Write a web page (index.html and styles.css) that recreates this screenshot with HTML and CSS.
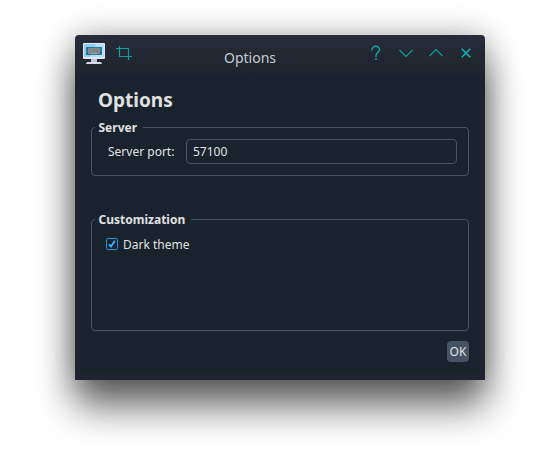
FILE: index.html
```
<!DOCTYPE html>
<html lang="en">
<head>
<meta charset="utf-8">
<title>Options</title>
<link rel="stylesheet" href="styles.css">
</head>
<body>
<main class="window">
  <header class="titlebar">
    <svg class="app-icon" width="24" height="22" viewBox="0 0 24 22">
      <rect x="1" y="0" width="22" height="16" rx="1" fill="#e2e5f3"/>
      <rect x="2" y="1" width="20" height="13" fill="#91cdf0"/>
      <path d="M14 1h8v13h-14z" fill="#b4e0f8"/>
      <rect x="4" y="4" width="16" height="8" fill="#227a99"/>
      <rect x="6" y="5" width="12" height="6" fill="#858b8e"/>
      <path d="M7 6.500h10M8 8.500h8" stroke="#767d80" stroke-dasharray="2 1"/>
      <path d="M9 10.500h6" stroke="#a1a5a7"/>
      <rect x="9" y="16" width="6" height="3" fill="#c0c4da"/>
      <path d="M5 19h14l1 2H4z" fill="#d6d9e9"/>
    </svg>
    <svg class="crop-icon" width="16" height="16" viewBox="0 0 16 16">
      <path d="M0 3.500h12.500V15M3.500 1v10.500H16" class="stroke"/>
    </svg>
    <span class="title">Options</span>
    <div class="controls">
      <svg width="30" height="30" viewBox="0 0 30 30"><path d="M12 12.500v-1a3.700 3.200 0 0 1 7.500 0c0 3.500-3.500 2.500-3.500 6.500v1M16 20v2" class="stroke help"/></svg>
      <svg width="30" height="30" viewBox="0 0 30 30"><path d="M9.500 12l6.500 6.500L22.500 12" class="stroke"/></svg>
      <svg width="30" height="30" viewBox="0 0 30 30"><path d="M9.500 18l6.500-6.500L22.500 18" class="stroke"/></svg>
      <svg width="30" height="30" viewBox="0 0 30 30"><path d="M11.700 10.700l8.600 8.600M20.300 10.700l-8.600 8.600" class="stroke close"/></svg>
    </div>
  </header>
  <section class="content">
    <h1>Options</h1>
    <fieldset class="server">
      <legend>Server</legend>
      <label for="port">Server port:</label>
      <input id="port" type="text" value="57100">
    </fieldset>
    <fieldset class="custom">
      <legend>Customization</legend>
      <label class="check">
        <svg width="12" height="12" viewBox="0 0 12 12"><rect x=".5" y=".5" width="11" height="11" rx="1" fill="#19232d" stroke="#2f8fd8"/><path d="M3 6.300l2 2.200L8.900 2.800" fill="none" stroke="#37aefe" stroke-width="2"/></svg>
        <span>Dark theme</span>
      </label>
    </fieldset>
    <button type="button">OK</button>
  </section>
</main>
</body>
</html>
```
FILE: styles.css
```
* { box-sizing: border-box; }
body {
  margin: 0;
  padding: 35px 75px;
  height: 465px;
  overflow: hidden;
  background: #fff;
  font: 12px/16px "Noto Sans", sans-serif;
  color: #e0e1e3;
}
.window {
  width: 410px;
  height: 345px;
  padding: 0 5px 7px;
  display: flex;
  flex-direction: column;
  border-radius: 4px 4px 0 0;
  background: linear-gradient(#272c38, #1f252f 38px);
  box-shadow: 0 26px 38px rgba(0, 0, 0, .6), 0 0 32px rgba(0, 0, 0, .28);
}
.titlebar {
  height: 38px;
  display: grid;
  grid-template-columns: 24px 16px 1fr auto;
  align-items: start;
}
.app-icon { margin: 8px 0 0 2px; }
.crop-icon { margin: 10px 0 0 12px; }
.title {
  margin: 13px 0 0 104px;
  font-size: 14px;
  line-height: 20px;
  color: #c3cdd2;
}
.controls {
  display: flex;
  margin: 3px 0 0;
}
.stroke { fill: none; stroke: #0ba09d; stroke-width: 1.2; }
.help { stroke: #0aa9a6; stroke-width: 1.4; }
.close { stroke: #0bb8b5; stroke-width: 1.5; }
.content {
  height: 300px;
  padding: 14px 11px 0;
  display: flex;
  flex-direction: column;
  background: #19232d;
}
h1 {
  margin: 0 0 0 7px;
  font-size: 19px;
  line-height: 26px;
}
fieldset {
  position: relative;
  margin: 0;
  border: 1px solid #455364;
  border-radius: 4px;
  display: flex;
}
legend {
  position: absolute;
  top: -8px;
  left: 3px;
  padding: 0 6px 0 3.5px;
  background: #19232d;
  font-weight: bold;
}
.server {
  height: 49px;
  margin-top: 14px;
  padding: 11px 11px 0 16px;
  justify-content: space-between;
}
.server label { line-height: 25px; }
input {
  width: 271px;
  height: 25px;
  padding: 0 6px;
  border: 1px solid #455364;
  border-radius: 4px;
  background: #19232d;
  color: inherit;
  font: inherit;
}
.custom {
  height: 112px;
  margin-top: 43px;
  padding: 16px 14px;
}
.check {
  display: flex;
  height: 16px;
  align-items: center;
  gap: 5px;
}
.check span { padding-top: 2px; }
button {
  align-self: flex-end;
  width: 22px;
  height: 21px;
  margin-top: 10px;
  padding: 0;
  border: 0;
  border-radius: 4px;
  background: #455364;
  color: inherit;
  font: inherit;
}
```
